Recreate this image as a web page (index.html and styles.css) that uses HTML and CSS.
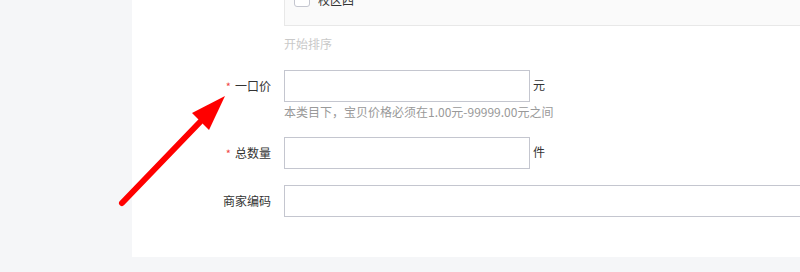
FILE: index.html
```html
<!DOCTYPE html>
<html lang="zh-CN">
<head>
<meta charset="utf-8">
<link rel="stylesheet" href="styles.css">
</head>
<body>
<div class="page">
  <div class="panel">
    <div class="row">
      <div class="label"></div>
      <div class="field">
        <div class="options">
          <label class="opt"><span class="checkbox"></span><span>校区四</span></label>
        </div>
        <div class="hint-light">开始排序</div>
      </div>
    </div>
    <div class="row row-price">
      <div class="label"><span class="req">*</span>一口价</div>
      <div class="field">
        <div class="input-line"><div class="input"></div><span class="unit">元</span></div>
        <div class="help">本类目下，宝贝价格必须在1.00元-99999.00元之间</div>
      </div>
    </div>
    <div class="row row-qty">
      <div class="label"><span class="req">*</span>总数量</div>
      <div class="field">
        <div class="input-line"><div class="input"></div><span class="unit">件</span></div>
      </div>
    </div>
    <div class="row row-code">
      <div class="label">商家编码</div>
      <div class="field">
        <div class="input-line"><div class="input input-wide"></div></div>
      </div>
    </div>
  </div>
  <svg class="arrow" width="800" height="272" viewBox="0 0 800 272">
    <line x1="122" y1="203" x2="200" y2="122" stroke="#ff0000" stroke-width="6" stroke-linecap="round"/>
    <polygon points="225,96 192,113 209,130" fill="#ff0000"/>
  </svg>
</div>
</body>
</html>
```
FILE: styles.css
```css
html, body {
  margin: 0;
  padding: 0;
  width: 800px;
  height: 272px;
  overflow: hidden;
  background: #f5f6f8;
  font-family: "Noto Sans CJK SC", "Noto Sans", sans-serif;
  font-size: 12px;
  color: #333;
}
.page {
  position: relative;
  width: 800px;
  height: 272px;
  padding-left: 132px;
  box-sizing: border-box;
}
.panel {
  background: #fff;
  height: 257px;
  overflow: hidden;
}
.row {
  display: flex;
}
.label {
  width: 152px;
  flex: none;
  box-sizing: border-box;
  padding-right: 13px;
  text-align: right;
  line-height: 32px;
  height: 32px;
  white-space: nowrap;
}
.req {
  color: #f04645;
  font-size: 11px;
  margin-right: 4px;
}
.field {
  flex: 1;
  min-width: 0;
}
.options {
  margin-top: -14px;
  height: 40px;
  background: #fafafa;
  border: 1px solid #e8e8e8;
  border-right: none;
  box-sizing: border-box;
  padding-left: 9px;
}
.opt {
  display: flex;
  align-items: center;
  height: 30px;
  margin-top: -3px;
}
.checkbox {
  width: 16px;
  height: 16px;
  box-sizing: border-box;
  border: 1px solid #c4c6cf;
  border-radius: 3px;
  background: #fff;
  margin-right: 8px;
}
.hint-light {
  margin-top: 9px;
  line-height: 18px;
  color: #c9c9c9;
}
.row-price {
  margin-top: 17px;
}
.input-line {
  display: flex;
  align-items: center;
}
.input {
  width: 246px;
  height: 32px;
  box-sizing: border-box;
  border: 1px solid #c4c6cf;
  background: #fff;
}
.input-wide {
  width: 600px;
  flex: none;
}
.unit {
  margin-left: 3px;
  line-height: 20px;
  margin-top: -3px;
}
.help {
  margin-top: 1px;
  line-height: 18px;
  color: #999;
}
.row-qty {
  margin-top: 16px;
}
.row-code {
  margin-top: 16px;
}
.arrow {
  position: absolute;
  left: 0;
  top: 0;
  pointer-events: none;
}
```
